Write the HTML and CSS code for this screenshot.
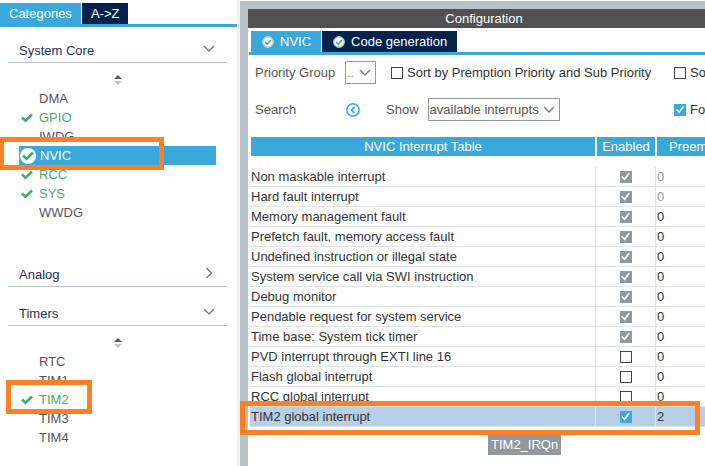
FILE: index.html
```html
<!DOCTYPE html>
<html lang="en">
<head>
  <meta charset="UTF-8">
  <meta name="viewport" content="width=device-width, initial-scale=1.0">
  <title>NVIC Configuration</title>
  <link rel="stylesheet" href="styles.css">
</head>
<body>
  <svg class="symbols" width="0" height="0">
    <symbol id="check" viewBox="0 0 12 10"><path d="M1 4.500l3.500 3.200L11 1.500" fill="none" stroke="currentColor" stroke-width="2.600"/></symbol>
    <symbol id="down" viewBox="0 0 12 8"><path d="M1 1l5 5 5-5" fill="none" stroke="currentColor" stroke-width="1.300"/></symbol>
    <symbol id="right" viewBox="0 0 8 12"><path d="M1.500 1l5 5-5 5" fill="none" stroke="currentColor" stroke-width="1.300"/></symbol>
    <symbol id="sort" viewBox="0 0 8 12"><path d="M0 5l4-4 4 4z" fill="#5c5c5c"/><path d="M0 7h8l-4 4z" fill="#c4c4c4"/></symbol>
    <symbol id="badge" viewBox="0 0 12 12"><circle cx="6" cy="6" r="5.700" fill="#fff"/><circle cx="6" cy="6" r="5" fill="none" stroke="#9ad3b0" stroke-width="1"/><path d="M3 6l2.200 2.200L9 4" fill="none" stroke="#3fae6a" stroke-width="1.500"/></symbol>
  </svg>

  <div class="app">
    <aside class="sidebar">
      <nav class="tabs">
        <button class="tab active">Categories</button>
        <button class="tab">A-&gt;Z</button>
      </nav>
      <div class="sections">
        <button class="section">System Core <svg class="down"><use href="#down"/></svg></button>
        <div class="list">
          <svg class="sort"><use href="#sort"/></svg>
          <ul>
            <li><a href="#">DMA</a></li>
            <li class="on"><svg class="check"><use href="#check"/></svg><a href="#">GPIO</a></li>
            <li><a href="#">IWDG</a></li>
            <li class="selected"><span class="disc"><svg class="check"><use href="#check"/></svg></span><a href="#">NVIC</a><span class="mark mark-nvic"></span></li>
            <li class="on"><svg class="check"><use href="#check"/></svg><a href="#">RCC</a></li>
            <li class="on"><svg class="check"><use href="#check"/></svg><a href="#">SYS</a></li>
            <li><a href="#">WWDG</a></li>
          </ul>
        </div>
        <button class="section">Analog <svg class="right"><use href="#right"/></svg></button>
        <button class="section">Timers <svg class="down"><use href="#down"/></svg></button>
        <div class="list">
          <svg class="sort"><use href="#sort"/></svg>
          <ul>
            <li><a href="#">RTC</a></li>
            <li><a href="#">TIM1</a></li>
            <li class="on"><svg class="check"><use href="#check"/></svg><a href="#">TIM2</a><span class="mark mark-tim"></span></li>
            <li><a href="#">TIM3</a></li>
            <li><a href="#">TIM4</a></li>
          </ul>
        </div>
      </div>
    </aside>

    <main class="main">
      <h1>Configuration</h1>
      <nav class="tabs config-tabs">
        <button class="tab active"><svg class="badge"><use href="#badge"/></svg>NVIC</button>
        <button class="tab"><svg class="badge"><use href="#badge"/></svg>Code generation</button>
      </nav>
      <div class="filters">
        <div class="group">
          <label for="group">Priority Group</label>
          <span class="select small"><select id="group"><option>..</option></select><svg class="down"><use href="#down"/></svg></span>
        </div>
        <label class="option"><input type="checkbox">Sort by Premption Priority and Sub Priority</label>
        <label class="option"><input type="checkbox">So</label>
      </div>
      <div class="filters">
        <div class="search">
          <span>Search</span>
          <button class="back" aria-label="Previous"><svg viewBox="0 0 14 14"><circle cx="7" cy="7" r="6.200" fill="none" stroke="#39a9dc" stroke-width="1.500"/><path d="M8.500 4L5.500 7l3 3" fill="none" stroke="#39a9dc" stroke-width="1.800"/></svg></button>
        </div>
        <div class="show">
          <label for="show">Show</label>
          <span class="select"><select id="show"><option>available interrupts</option></select><svg class="down"><use href="#down"/></svg></span>
        </div>
        <label class="option"><input type="checkbox" checked>Fo</label>
      </div>
      <table>
        <thead>
          <tr><th class="name">NVIC Interrupt Table</th><th class="enabled">Enabled</th><th class="priority">Preem</th></tr>
        </thead>
        <tbody>
          <tr class="fixed"><td>Non maskable interrupt</td><td><input type="checkbox" aria-label="Enabled" checked disabled></td><td>0</td></tr>
          <tr class="fixed"><td>Hard fault interrupt</td><td><input type="checkbox" aria-label="Enabled" checked disabled></td><td>0</td></tr>
          <tr><td>Memory management fault</td><td><input type="checkbox" aria-label="Enabled" checked disabled></td><td>0</td></tr>
          <tr><td>Prefetch fault, memory access fault</td><td><input type="checkbox" aria-label="Enabled" checked disabled></td><td>0</td></tr>
          <tr><td>Undefined instruction or illegal state</td><td><input type="checkbox" aria-label="Enabled" checked disabled></td><td>0</td></tr>
          <tr><td>System service call via SWI instruction</td><td><input type="checkbox" aria-label="Enabled" checked disabled></td><td>0</td></tr>
          <tr><td>Debug monitor</td><td><input type="checkbox" aria-label="Enabled" checked disabled></td><td>0</td></tr>
          <tr><td>Pendable request for system service</td><td><input type="checkbox" aria-label="Enabled" checked disabled></td><td>0</td></tr>
          <tr><td>Time base: System tick timer</td><td><input type="checkbox" aria-label="Enabled" checked disabled></td><td>0</td></tr>
          <tr><td>PVD interrupt through EXTI line 16</td><td><input type="checkbox" aria-label="Enabled"></td><td>0</td></tr>
          <tr><td>Flash global interrupt</td><td><input type="checkbox" aria-label="Enabled"></td><td>0</td></tr>
          <tr><td>RCC global interrupt</td><td><input type="checkbox" aria-label="Enabled"></td><td>0</td></tr>
          <tr class="current"><td>TIM2 global interrupt<span class="mark mark-row"></span><span class="tooltip">TIM2_IRQn</span></td><td><input type="checkbox" aria-label="Enabled" checked></td><td>2</td></tr>
        </tbody>
      </table>
    </main>
  </div>
</body>
</html>
```

FILE: styles.css
```css
* {
  box-sizing: border-box;
}
body {
  margin: 0;
  background: #fff;
  color: #333;
  font: 13px/18px "Liberation Sans", Arial, sans-serif;
  overflow: hidden;
}
button, select {
  font: inherit;
  color: inherit;
  border: 0;
  background: none;
  padding: 0;
  margin: 0;
}
.symbols {
  position: absolute;
}
.app {
  display: flex;
  min-height: 100vh;
}

/* tabs */
.tabs {
  display: flex;
  gap: 1px;
  border-bottom: 3px solid #39a9dc;
}
.tab {
  display: flex;
  align-items: center;
  height: 21px;
  padding: 0 9px;
  background: #03234b;
  color: #fff;
}
.tab.active {
  background: #39a9dc;
}
.badge {
  width: 12px;
  height: 12px;
  margin-right: 6px;
}

/* left side */
.sidebar {
  flex: 0 0 240px;
  padding-top: 3px;
  border-right: 3px solid #f0f1f2;
}
.sections {
  padding: 0 10px 0 8px;
}
.section {
  display: flex;
  justify-content: space-between;
  align-items: center;
  width: 100%;
  height: 36px;
  margin-bottom: 3px;
  padding: 12px 12px 0 11px;
  border-bottom: 1px solid #b3c2cb;
  color: #1e2f62;
}
.down {
  width: 12px;
  height: 8px;
  color: #777;
}
.section .down {
  margin-bottom: 4px;
}
.section .right {
  width: 8px;
  height: 12px;
  margin: 0 2px 4px 0;
  color: #777;
}
.list {
  display: flow-root;
  margin-top: -3px;
  padding: 0 11px 29px;
}
.sort {
  display: block;
  width: 8px;
  height: 12px;
  margin: 11px auto 3px;
}
.list ul {
  list-style: none;
  margin: 0;
  padding: 0;
}
.list li {
  position: relative;
  display: flex;
  align-items: center;
  height: 19px;
  padding-left: 20px;
  color: #555;
}
.list a {
  color: inherit;
  text-decoration: none;
}
.check {
  width: 12px;
  height: 10px;
  color: #3fae6a;
}
.list .on {
  padding-left: 2px;
  gap: 6px;
  color: #3fae6a;
}
.list .selected {
  padding-left: 1px;
  gap: 4px;
  background: #39a9dc;
  color: #fff;
}
.disc {
  display: flex;
  align-items: center;
  justify-content: center;
  width: 16px;
  height: 16px;
  border-radius: 50%;
  background: #fff;
}

/* configuration */
.main {
  flex: 1;
  min-width: 0;
  margin-top: 1px;
  border-top: 8px solid #b8c3c9;
  border-left: 8px solid #b8c3c9;
}
h1 {
  margin: 0 0 3px;
  padding-left: 15px;
  background: #505150;
  color: #fff;
  font-size: 13px;
  font-weight: normal;
  line-height: 19px;
  text-align: center;
}
.config-tabs {
  margin: 0 0 6px 1px;
  padding-left: 2px;
}
.config-tabs .tab {
  padding: 0 10px 0 11px;
}
.filters {
  display: grid;
  grid-template-columns: 136px 283px 1fr;
  align-items: center;
  height: 23px;
  margin-bottom: 14px;
  padding-left: 7px;
  color: #555;
  white-space: nowrap;
}
.group, .search {
  display: flex;
  align-items: center;
  justify-content: space-between;
  padding-right: 15px;
}
.search {
  padding-right: 31px;
}
.show {
  display: flex;
  align-items: center;
  gap: 9px;
  margin-left: -5px;
}
.select {
  position: relative;
  width: 132px;
}
.select.small {
  width: 31px;
}
.select select {
  display: block;
  width: 100%;
  height: 23px;
  padding: 0 1px;
  border: 1px solid #91989e;
  border-radius: 0;
  appearance: none;
}
.select .down {
  position: absolute;
  right: 5px;
  top: 8px;
  pointer-events: none;
}
.small select {
  color: #b08a4a;
}
.back {
  display: flex;
}
.back svg {
  width: 14px;
  height: 14px;
}
.option {
  display: flex;
  align-items: center;
  gap: 4px;
  color: #333;
}
input[type="checkbox"] {
  display: block;
  flex: none;
  width: 12px;
  height: 12px;
  margin: 0;
  border: 1px solid #444;
  background: #fff;
  appearance: none;
}
input[type="checkbox"]:checked {
  border-color: #39a9dc;
  background: #39a9dc;
}
input[type="checkbox"]:disabled {
  border-color: #91989e;
  background: #91989e;
}
input[type="checkbox"]:checked::before {
  content: "";
  display: block;
  width: 10px;
  height: 10px;
  background: #fff;
  clip-path: polygon(8% 55%, 20% 45%, 40% 66%, 80% 12%, 92% 22%, 42% 90%);
}

/* interrupt table */
table {
  width: calc(100% - 2px);
  margin: 16px 0 0 2px;
  border-collapse: separate;
  border-spacing: 0;
  table-layout: fixed;
}
th {
  height: 19px;
  padding: 0;
  border-left: 1px solid #fff;
  border-right: 1px solid #fff;
  background: #39a9dc;
  color: #fff;
  font-weight: normal;
}
.name {
  width: 346px;
}
.enabled {
  width: 60px;
}
.priority {
  padding-left: 12px;
  border-right: 0;
  text-align: left;
}
tbody::before {
  content: "";
  display: block;
  height: 11px;
}
td {
  height: 20px;
  padding: 0 1px;
  border-right: 1px solid #e0e3e5;
  border-bottom: 1px solid #e0e3e5;
}
td:first-child {
  position: relative;
}
td:last-child {
  border-right: 0;
}
td input[type="checkbox"] {
  margin: 0 auto;
}
.fixed td:last-child {
  color: #91989e;
}
.current {
  background: #b8cfe5;
}

/* highlights over the content */
.mark {
  position: absolute;
  z-index: 1;
  border: 5px solid #ff7f27;
  pointer-events: none;
}
.mark-nvic {
  top: -9px;
  left: -20px;
  width: 165px;
  height: 33px;
}
.mark-tim {
  top: -10px;
  left: -13px;
  width: 86px;
  height: 34px;
}
.mark-row {
  top: -6px;
  left: -10px;
  width: 460px;
  height: 34px;
}
.tooltip {
  position: absolute;
  top: 28px;
  left: 238px;
  padding: 1px 3px;
  background: #91989e;
  color: #fff;
}
```
